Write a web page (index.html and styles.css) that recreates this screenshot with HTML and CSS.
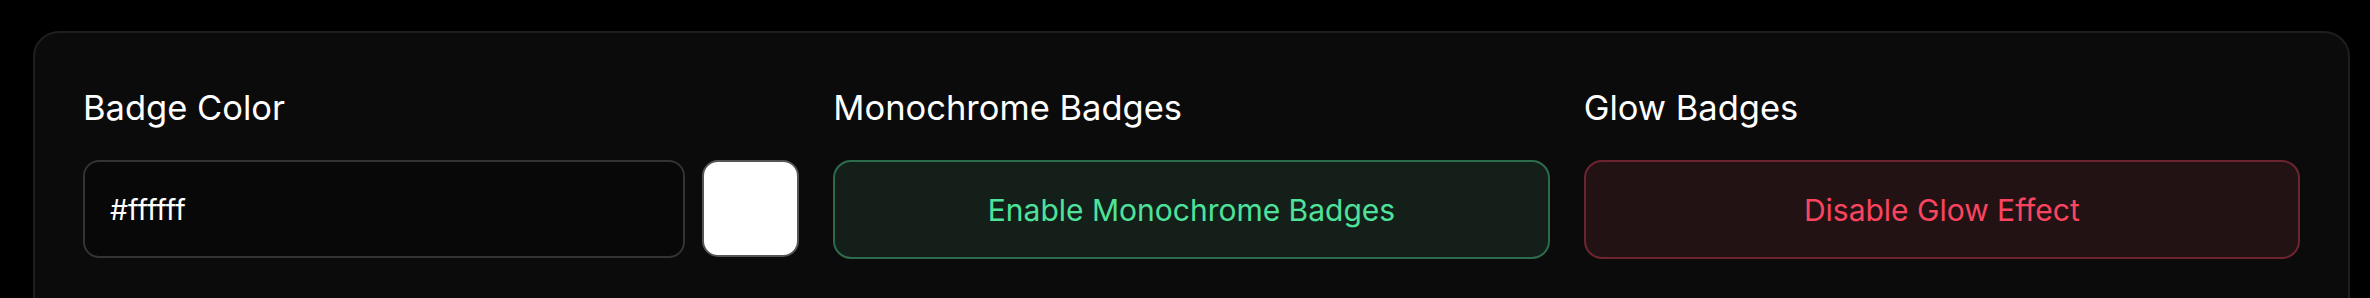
FILE: index.html
```html
<!DOCTYPE html>
<html lang="en">
<head>
<meta charset="utf-8">
<title>Badge Settings</title>
<link rel="stylesheet" href="styles.css">
</head>
<body>
<div class="page">
  <section class="card">
    <div class="grid">
      <div class="field">
        <div class="label">Badge Color</div>
        <div class="color-row">
          <div class="input">#ffffff</div>
          <div class="swatch"></div>
        </div>
      </div>
      <div class="field">
        <div class="label">Monochrome Badges</div>
        <button class="btn btn-green">Enable Monochrome Badges</button>
      </div>
      <div class="field">
        <div class="label">Glow Badges</div>
        <button class="btn btn-red">Disable Glow Effect</button>
      </div>
    </div>
  </section>
</div>
</body>
</html>
```
FILE: styles.css
```css
html, body {
  margin: 0;
  padding: 0;
  background: #000;
  height: 100%;
  overflow: hidden;
}
body {
  font-family: Inter, "Noto Sans", sans-serif;
  color: #fff;
}
.page {
  padding: 31px 20px 0 33px;
}
.card {
  background: #0b0b0b;
  border: 2px solid #1e1e1e;
  border-radius: 26px;
  padding: 53px 48px 20px 48px;
  height: 300px;
  box-sizing: border-box;
}
.grid {
  display: grid;
  grid-template-columns: 1fr 1fr 1fr;
  column-gap: 34px;
}
.field {
  display: flex;
  flex-direction: column;
}
.label {
  font-size: 34.5px;
  line-height: 44px;
  font-weight: 400;
  margin-bottom: 30px;
  color: #fff;
}
.color-row {
  display: flex;
  gap: 17px;
}
.input {
  flex: 1;
  height: 98px;
  box-sizing: border-box;
  border: 2px solid #333;
  border-radius: 16px;
  background: #080808;
  display: flex;
  align-items: center;
  padding-left: 25px;
  font-size: 28.5px;
  color: #fff;
}
.swatch {
  width: 97px;
  height: 97px;
  box-sizing: border-box;
  border: 2px solid #555;
  border-radius: 16px;
  background: #fff;
}
.btn {
  height: 99px;
  box-sizing: border-box;
  border-radius: 18px;
  font-family: Inter, "Noto Sans", sans-serif;
  font-size: 30px;
  display: flex;
  align-items: center;
  justify-content: center;
  padding: 0;
}
.btn-green {
  background: #141f1a;
  border: 2px solid #2d6b4b;
  color: #4ee39a;
}
.btn-red {
  background: #231214;
  border: 2px solid #6c2530;
  color: #fb4560;
}
```
